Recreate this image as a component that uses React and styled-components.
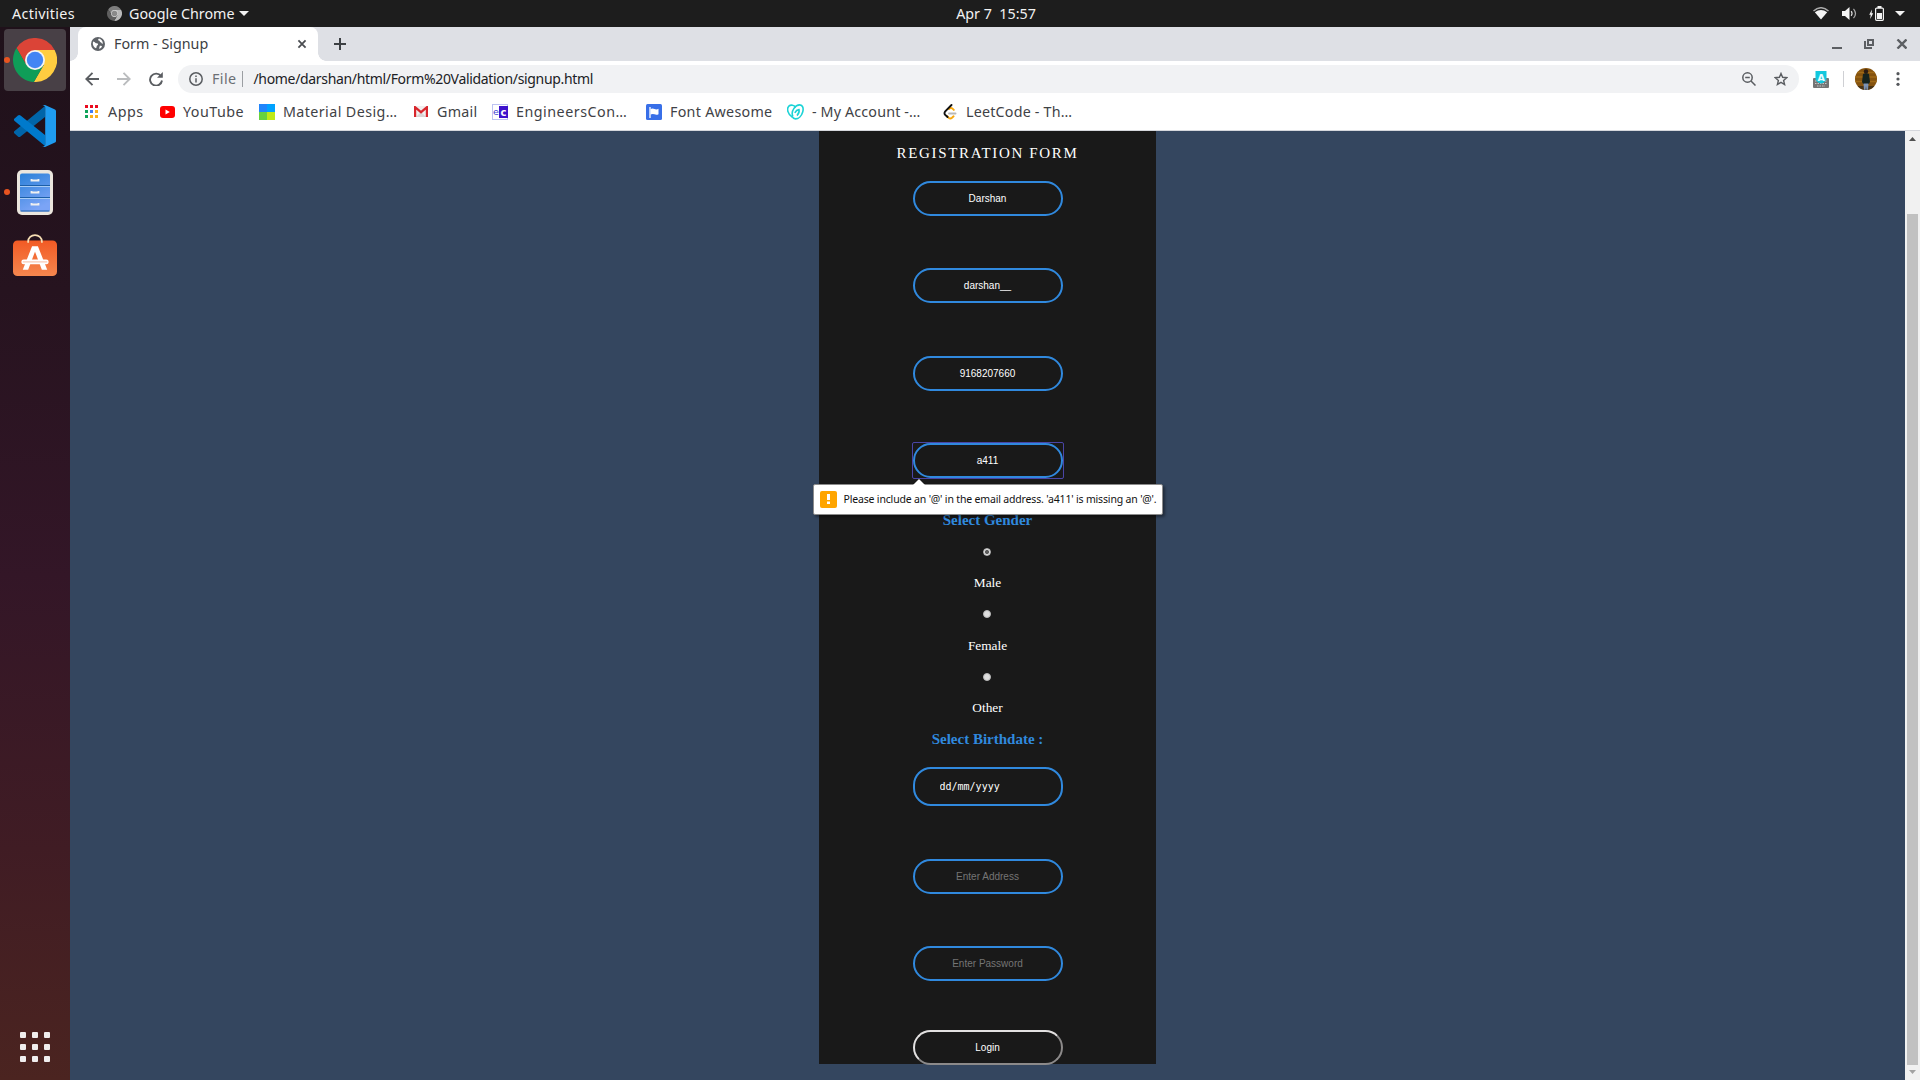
import React from "react";
import styled, { createGlobalStyle, css } from "styled-components";

const GlobalStyle = createGlobalStyle`
  html, body { margin: 0; padding: 0; overflow: hidden; }
  *, *::before, *::after { box-sizing: border-box; }
  svg { display: block; flex: none; }
`;

const uiFont = css`
  font-family: "Noto Sans", sans-serif;
  font-size: 14.3px;
  line-height: 20px;
  white-space: pre;
`;

const Desktop = styled.div`
  width: 1920px;
  height: 1080px;
  display: flex;
  flex-direction: column;
  overflow: hidden;
`;

/* ---------- GNOME top bar ---------- */
const TopBar = styled.header`
  height: 27px;
  flex: none;
  background: #1d1d1d;
  color: #f2f2f2;
  display: grid;
  grid-template-columns: 1fr auto 1fr;
  align-items: center;
  padding: 0 15px 0 12px;
  ${uiFont}
`;
const TopLeft = styled.div`
  display: flex;
  align-items: center;
`;
const TopRight = styled.div`
  display: flex;
  align-items: center;
  justify-content: flex-end;
`;
const Label = styled.span`
  letter-spacing: ${(p) => p.$track || 0}px;
  margin-left: ${(p) => p.$ml || 0}px;
  font-size: ${(p) => p.$size || 14.3}px;
  color: ${(p) => p.$color || "inherit"};
  flex: none;
`;
const Clock = styled.time`
  margin-left: 75px;
`;
const Gap = styled.span`
  display: flex;
  margin-left: ${(p) => p.$ml}px;
`;

/* ---------- dock ---------- */
const Workspace = styled.div`
  flex: 1;
  display: flex;
  min-height: 0;
`;
const Dock = styled.nav`
  width: 70px;
  flex: none;
  padding: 2px 4px 18px;
  display: flex;
  flex-direction: column;
  align-items: center;
  gap: 4px;
  background: linear-gradient(#1f111a 0%, #26131f 25%, #331627 52%, #401c24 78%, #4b2420 100%);
`;
const DockItem = styled.div`
  width: 62px;
  height: 62px;
  flex: none;
  border-radius: 4px;
  display: flex;
  align-items: center;
  justify-content: center;
  position: relative;
  background: ${(p) => (p.$active ? "#484046" : "transparent")};
  ${(p) =>
    p.$running &&
    css`
      &::before {
        content: "";
        position: absolute;
        left: 0;
        top: 28px;
        width: 6px;
        height: 6px;
        border-radius: 50%;
        background: #e95420;
      }
    `}
`;
const AppGrid = styled.div`
  margin-top: auto;
  display: grid;
  grid-template-columns: repeat(3, 6px);
  gap: 6px;
`;
const AppDot = styled.span`
  height: 6px;
  border-radius: 1px;
  background: #f0eeee;
`;

/* ---------- browser chrome ---------- */
const Browser = styled.main`
  flex: 1;
  min-width: 0;
  display: flex;
  flex-direction: column;
`;
const TabStrip = styled.div`
  height: 34px;
  flex: none;
  background: #dee0e5;
  display: flex;
  align-items: center;
  padding: 0 13px 0 8px;
  color: #3c4043;
  ${uiFont}
`;
const Tab = styled.div`
  width: 240px;
  height: 34px;
  background: #fff;
  border-radius: 8px 8px 0 0;
  display: flex;
  align-items: center;
  padding: 0 11px 0 13px;
  position: relative;
  &::before,
  &::after {
    content: "";
    position: absolute;
    bottom: 0;
    width: 8px;
    height: 8px;
  }
  &::before {
    left: -8px;
    background: radial-gradient(circle at 0 0, transparent 7.5px, #fff 8px);
  }
  &::after {
    right: -8px;
    background: radial-gradient(circle at 100% 0, transparent 7.5px, #fff 8px);
  }
`;
const Spacer = styled.span`
  flex: 1;
`;
const Toolbar = styled.div`
  height: 36px;
  flex: none;
  background: #fff;
  display: flex;
  align-items: center;
  padding: 0 19px 0 15px;
  ${uiFont}
`;
const Omnibox = styled.div`
  width: 1621px;
  height: 28px;
  margin-left: 15px;
  border-radius: 14px;
  background: #f1f2f4;
  display: flex;
  align-items: center;
  padding: 0 11px;
`;
const Divider = styled.span`
  width: 1px;
  height: 16px;
  flex: none;
  margin-left: ${(p) => p.$ml}px;
  background: ${(p) => p.$color};
`;
const Bookmarks = styled.div`
  height: 34px;
  flex: none;
  background: #fff;
  border-bottom: 1px solid #d5d7dc;
  padding: 0 0 4px 15px;
  display: flex;
  align-items: center;
  color: #3f4246;
  ${uiFont}
`;
const Bookmark = styled.div`
  width: ${(p) => p.$w}px;
  flex: none;
  display: flex;
  align-items: center;
`;
const BookmarkIcon = styled.span`
  width: ${(p) => p.$w}px;
  flex: none;
  display: flex;
`;

/* ---------- page ---------- */
const Viewport = styled.div`
  flex: 1;
  display: flex;
  min-height: 0;
`;
const Page = styled.div`
  flex: 1;
  background: #34465f;
  display: flex;
  justify-content: center;
  align-items: flex-start;
`;
const ScrollBar = styled.div`
  width: 15px;
  flex: none;
  background: #f1f1f1;
  display: flex;
  flex-direction: column;
  align-items: center;
  padding: 6px 0;
`;
const Thumb = styled.div`
  width: 11px;
  height: 851px;
  margin: 73px 0 5px;
  background: #c1c1c1;
`;
const Form = styled.form`
  width: 337px;
  height: 933px;
  background: #191919;
  padding-top: 13px;
  display: flex;
  flex-direction: column;
  align-items: center;
  color: #fff;
  font-family: "Liberation Serif", serif;
`;
const Title = styled.h1`
  margin: 0 0 19px;
  flex: none;
  font-size: 15px;
  line-height: 18px;
  font-weight: 400;
  letter-spacing: 1.65px;
`;
const Field = styled.div`
  position: relative;
  flex: none;
  width: 150px;
  height: ${(p) => p.$h || 35}px;
  margin-bottom: ${(p) => p.$mb}px;
  ${(p) =>
    p.$focused &&
    css`
      outline: 1px solid #4a45a6;
      border-radius: 1px;
    `}
`;
const Input = styled.input`
  display: block;
  width: 100%;
  height: 100%;
  margin: 0;
  border: 2px solid #3089de;
  border-radius: 18px;
  background: transparent;
  color: #fff;
  text-align: center;
  outline: none;
  padding: 0 10px;
  font: 10px "Liberation Sans", sans-serif;
  &::placeholder {
    color: #757575;
    opacity: 1;
  }
`;
const DateInput = styled(Input)`
  padding-left: 25px;
  text-align: left;
  font-family: "DejaVu Sans Mono", monospace;
`;
const SubHead = styled.h2`
  margin: 0 0 19px;
  flex: none;
  font-size: 15px;
  line-height: 18px;
  color: #3089de;
`;
const Option = styled.label`
  flex: none;
  display: flex;
  flex-direction: column;
  align-items: center;
  gap: 19.3px;
  height: 62.5px;
  font-size: 13.33px;
  line-height: 16px;
  &:last-of-type {
    height: 57px;
  }
`;
const Radio = styled.span`
  width: 8px;
  height: 8px;
  flex: none;
  border-radius: 50%;
  margin-right: 1px;
  border: 1px solid #b9b9b9;
  background: ${(p) =>
    p.$checked ? "radial-gradient(circle, #5c5c5c 0 1.6px, #dcdcdc 2.4px)" : "#dedede"};
`;
const Submit = styled.button`
  flex: none;
  width: 150px;
  height: 35px;
  margin: 0;
  padding: 0;
  border: 2px solid;
  border-color: #e3e1e1 #8c8a8a #8c8a8a #e3e1e1;
  border-radius: 18px;
  background: transparent;
  color: #fff;
  font: 10px "Liberation Sans", sans-serif;
`;
const Tooltip = styled.div`
  position: absolute;
  left: -100px;
  top: 41px;
  width: 350px;
  height: 31px;
  background: #fff;
  border: 1px solid #8b8b8b;
  border-radius: 2px;
  box-shadow: 2px 2px 3px rgba(0, 0, 0, 0.4);
  display: flex;
  align-items: center;
  padding: 0 6px 1px;
  color: #111;
  z-index: 1;
  ${uiFont}
`;
const TooltipArrow = styled.span`
  position: absolute;
  left: 99px;
  top: -6px;
  border: 6px solid transparent;
  border-top: 0;
  border-bottom-color: #fff;
`;
const WarnBadge = styled.span`
  width: 17px;
  height: 17px;
  flex: none;
  border-radius: 2px;
  background: #ffa500;
  display: flex;
  align-items: center;
  justify-content: center;
`;

/* ---------- icons ---------- */
const ChromeLogo = ({ size, mono }) => {
  const c = mono
    ? ["#7d7d7d", "#b9b9b9", "#5f5f5f", "#d9d9d9", "#8a8a8a"]
    : ["#db4437", "#ffcd40", "#0f9d58", "#f4f4f4", "#4285f4"];
  return (
    <svg width={size} height={size} viewBox="-22 -22 44 44">
      <path fill={c[0]} d="M-18.46-11.97A22 22 0 0 1 19.6-10H0L-8.66 5z" />
      <path fill={c[1]} d="M19.6-10A22 22 0 0 1-1.14 21.97L8.66 5 0-10z" />
      <path fill={c[2]} d="M-1.14 21.97A22 22 0 0 1-18.46-11.97L-8.66 5H8.66z" />
      <circle r="10" fill={c[3]} />
      <circle r="8.2" fill={c[4]} />
    </svg>
  );
};

const VsCode = () => (
  <svg width="42" height="42" viewBox="0 0 42 42">
    <path fill="#0065a9" d="M31 1v11L6.5 31.6a2 2 0 0 1-2.6-.1L.6 28.600a1.600 1.600 0 0 1 0-2.500z" />
    <path fill="#007acc" d="M31 41V30L6.500 10.400a2 2 0 0 0-2.600.1L.6 13.400a1.600 1.600 0 0 0 0 2.500z" />
    <path fill="#1f9cf0" d="M31 0l10 4.400a1.800 1.800 0 0 1 1 1.600v30a1.800 1.800 0 0 1-1 1.600L31 42c-1 .3-2-.2-3-1 1.500 1 3.200.2 3.200-1.500V2.500C31.200.8 29.500 0 28 1c1-.8 2-1.300 3-1z" />
  </svg>
);

const Files = () => (
  <svg width="36" height="45" viewBox="0 0 36 45">
    <defs>
      <linearGradient id="drawer" x1="0" y1="0" x2="0.4" y2="1">
        <stop offset="0" stopColor="#2a80d8" />
        <stop offset="1" stopColor="#7ba4f6" />
      </linearGradient>
    </defs>
    <rect width="36" height="45" rx="5" fill="#ebe6de" />
    <rect x="3" y="3.500" width="30" height="38" rx="2" fill="url(#drawer)" />
    <path d="M3 15.500h30M3 27.500h30M3.500 41h29" stroke="#1c5fa8" strokeWidth="1" />
    <path d="M3 16.500h30M3 28.500h30" stroke="#a8ccf5" strokeWidth="1" />
    <path
      d="M14.500 9v1.500h7V9M14.500 21v1.500h7V21M14.500 33v1.500h7V33"
      fill="none"
      stroke="#f0f0f0"
      strokeWidth="1.800"
    />
  </svg>
);

const Software = () => (
  <svg width="44" height="48" viewBox="0 0 45 49">
    <defs>
      <linearGradient id="bag" x1="0" y1="0" x2="0" y2="1">
        <stop offset="0" stopColor="#f25a24" />
        <stop offset="1" stopColor="#f5874f" />
      </linearGradient>
    </defs>
    <rect y="6.500" width="45" height="36.500" rx="4.500" fill="url(#bag)" />
    <path d="M15.500 9V7.500a7 6.500 0 0 1 14 0V9" fill="none" stroke="#f7dfb4" strokeWidth="1.800" />
    <path d="M19.500 12.500h6L35 36.500h-5.500L22.500 18l-7 18.500H10z" fill="#fff" />
    <rect x="8.500" y="26" width="28" height="5" rx="2.500" fill="#fff" />
    <path d="M10 28.500h25" stroke="#f5b9a0" strokeWidth="1" />
  </svg>
);

const Caret = ({ w = 10, h = 5 }) => (
  <svg width={w} height={h} viewBox="0 0 10 5" preserveAspectRatio="none">
    <path d="M0 0h10L5 5z" fill="#f2f2f2" />
  </svg>
);

const Wifi = () => (
  <svg width="16" height="13" viewBox="0 0 16 13">
    <path d="M.5 4Q8-2.500 15.500 4" fill="none" stroke="#aaa" strokeWidth="1.500" />
    <path d="M1.800 5.200Q8 0.800 14.200 5.200L8 12.500z" fill="#f4f4f4" />
  </svg>
);

const Volume = () => (
  <svg width="15" height="13" viewBox="0 0 15 13">
    <path d="M0 4h3l4.500-4v13L3 9H0z" fill="#f4f4f4" />
    <path d="M9.200 4.200q1.700 2.300 0 4.600" fill="none" stroke="#ddd" strokeWidth="1.200" />
    <path d="M11.500 1.800q4 4.700 0 9.400" fill="none" stroke="#aaa" strokeWidth="1.200" />
  </svg>
);

const Battery = () => (
  <svg width="15" height="15" viewBox="0 0 15 15">
    <path d="M3 3.500L.2 8.800h1.500L1.200 13l3-5.800H2.600z" fill="#f4f4f4" />
    <rect x="6.600" y="2.100" width="7.800" height="12.200" rx="1" fill="none" stroke="#f4f4f4" strokeWidth="1.200" />
    <rect x="8.500" y="0" width="4" height="2" fill="#f4f4f4" />
    <rect x="8" y="7" width="5" height="6" fill="#f4f4f4" />
  </svg>
);

const Globe = () => (
  <svg width="14" height="14" viewBox="0 0 14 14">
    <circle cx="7" cy="7" r="7" fill="#5f6368" />
    <path
      d="M2.200 4.600C4.500 5 3.800 6.300 5.600 6.300 7.400 6.300 7.600 7.800 6.200 8.500 5.200 9 6 10.500 5 11.300 3 10.500 1.700 8.500 1.800 6zM8 1.600C6.600 2.600 7 3.700 8.300 3.700 9.200 3.900 8.300 5.200 9.600 5.300 10.700 5.400 10.400 7 11.900 6.600 11.800 4 10.200 2.200 8 1.600zM8.800 8.800C10 8.300 11 9 11 9.800 10.200 11 9 11.700 8 11.900z"
      fill="#fff"
    />
  </svg>
);

const Stroke = ({ size = 14, w = 1.6, color = "#5a5d61", d, children }) => (
  <svg width={size} height={size} viewBox="0 0 14 14" fill="none" stroke={color} strokeWidth={w}>
    {d && <path d={d} />}
    {children}
  </svg>
);

const AppsIcon = () => {
  const colors = ["#ea0b1f", "#ea0b1f", "#ea0b1f", "#10a35a", "#3f7cf5", "#fbb01a", "#10a35a", "#fbb01a", "#fbb01a"];
  return (
    <svg width="13" height="13" viewBox="0 0 13 13">
      {colors.map((c, i) => (
        <rect key={i} x={(i % 3) * 5} y={Math.floor(i / 3) * 5} width="3" height="3" fill={c} />
      ))}
    </svg>
  );
};
const YouTubeIcon = () => (
  <svg width="15" height="12" viewBox="0 0 15 12">
    <rect width="15" height="12" rx="3" fill="#f00" />
    <path d="M5.500 3.600v4.800L9.800 6z" fill="#fff" />
  </svg>
);
const MaterialIcon = () => (
  <svg width="16" height="16" viewBox="0 0 16 16">
    <path fill="#2185fb" d="M0 0h8v8H0z" />
    <path fill="#00a2ff" d="M8 0h8v8H8z" />
    <path fill="#67d33e" d="M0 8h8v8H0z" />
    <path fill="#bfea17" d="M8 8h8v8H8z" />
  </svg>
);
const GmailIcon = () => (
  <svg width="14" height="11" viewBox="0 0 14 11">
    <path fill="#f1eeee" d="M0 0h14v11H0z" />
    <path fill="#d9d4d4" d="M2 11l5-5 5 5z" />
    <path d="M1.100 11V1.200L7 6.200l5.900-5V11" fill="none" stroke="#d8262c" strokeWidth="2.200" />
  </svg>
);
const IconText = styled.text`
  font: ${(p) => (p.$bold ? "bold " : "")}${(p) => p.$size}px "DejaVu Sans", sans-serif;
`;
const EcIcon = () => (
  <svg width="16" height="16" viewBox="0 0 16 16">
    <rect x=".5" y=".5" width="15" height="15" fill="#fff" stroke="#bdc3f2" />
    <rect x="7" y="2" width="9" height="12" fill="#3d12cc" />
    <IconText x="1" y="11" $size={9.5} fill="#3d3fd0">e</IconText>
    <IconText x="8.500" y="11.500" $size={10} $bold fill="#fff">c</IconText>
  </svg>
);
const FontAwesomeIcon = () => (
  <svg width="16" height="16" viewBox="0 0 16 16">
    <rect width="16" height="16" rx="1.500" fill="#386fe8" />
    <path d="M4 3v11" stroke="#fff" strokeWidth="1.300" />
    <path d="M4.500 5q2-1 4 0t4-.2v5.400q-2 1-4 .1t-4 .2z" fill="#fff" />
  </svg>
);
const GoDaddyIcon = () => (
  <svg width="17" height="16" viewBox="0 0 17 16" fill="none" stroke="#1bd3d6" strokeWidth="1.600">
    <path d="M5.200 13C.5 10-.5 4.500 1.800 2.200 4 .2 7 1.200 8.800 3.200" />
    <path d="M5.800 12.200C3.500 7 8.500.9 12.700.9c3.200 0 4 3.600 3 7-1.200 4-4.200 7-7.200 7-1.500 0-2.700-1-3.300-2.200" />
    <path d="M7.800 8.800c1-1.800 2.700-3 4.200-3.200.4 1.800-.3 4.200-2 6" />
  </svg>
);
const LeetCodeIcon = () => (
  <svg width="15" height="16" viewBox="0 0 15 16" fill="none" strokeLinecap="round" strokeWidth="1.900">
    <path d="M6 9.500h6.500" stroke="#b8b8b8" />
    <path d="M4 12l1.600 1.700q1.700 1.500 3.400.1l1.600-1.500M6 5l1-.8q1.300-.7 2.500.4l1.300 1.300" stroke="#f9a80c" />
    <path d="M8.500 1L2 7.700q-1 1.500 0 3L4.500 13" stroke="#111" />
  </svg>
);
const KeyboardIcon = () => (
  <svg width="16" height="17" viewBox="0 0 16 17">
    <rect y="7" width="16" height="10" rx="1" fill="#757575" />
    <path d="M2 10h12M2 12.500h12M4 15h8" stroke="#c9c9c9" strokeWidth="1" strokeDasharray="1.500 1" />
    <path d="M2.500 0h11v8.500q-2 3.500-5.500 4-3.500-.5-5.500-4z" fill="#12c8de" />
    <IconText x="4.400" y="9.500" $size={9.5} $bold fill="#e8fbff">A</IconText>
  </svg>
);
const Avatar = () => (
  <svg width="22" height="22" viewBox="0 0 22 22">
    <defs>
      <clipPath id="avatar"><circle cx="11" cy="11" r="11" /></clipPath>
    </defs>
    <g clipPath="url(#avatar)">
      <path fill="#85530f" d="M0 0h22v22H0z" />
      <path d="M0 4.500h22M0 9h22M0 13.500h22" stroke="#a06a17" strokeWidth="1.500" />
      <path d="M0 18h22v4H0z" fill="#4a3416" />
      <circle cx="11" cy="3.500" r="2.200" fill="#2b1b12" />
      <path d="M8 6q3-1.500 6 0l1 8-1.200 2H8.200L7 14z" fill="#15231f" />
      <path d="M8.500 15.500h5L13 22h-1.500L11 18l-.5 4H9z" fill="#7c93b5" />
    </g>
  </svg>
);

const bookmarks = [
  { w: 75, iw: 23, icon: <AppsIcon />, text: "Apps", track: 0.5 },
  { w: 99, iw: 23, icon: <YouTubeIcon />, text: "YouTube", track: 0.47 },
  { w: 155, iw: 24, icon: <MaterialIcon />, text: "Material Desig…", track: 0.4 },
  { w: 78, iw: 23, icon: <GmailIcon />, text: "Gmail", track: 0.25 },
  { w: 154, iw: 24, icon: <EcIcon />, text: "EngineersCon…", track: 0.5 },
  { w: 141, iw: 24, icon: <FontAwesomeIcon />, text: "Font Awesome", track: 0.27 },
  { w: 156, iw: 25, icon: <GoDaddyIcon />, text: "- My Account -…", track: 0.15 },
  { w: 140, iw: 23, icon: <LeetCodeIcon />, text: "LeetCode - Th…", track: 0.2 },
];

const fields = ["Darshan", "darshan__", "9168207660"];
const genders = ["Male", "Female", "Other"];

export default function App() {
  return (
    <Desktop>
      <GlobalStyle />
      <TopBar>
        <TopLeft>
          <Label $track={0.34}>Activities</Label>
          <Gap $ml={32}><ChromeLogo size={15} mono /></Gap>
          <Label $ml={7}>Google Chrome</Label>
          <Gap $ml={4}><Caret /></Gap>
        </TopLeft>
        <Clock>Apr 7  15:57</Clock>
        <TopRight>
          <Wifi />
          <Gap $ml={13}><Volume /></Gap>
          <Gap $ml={12}><Battery /></Gap>
          <Gap $ml={11}><Caret /></Gap>
        </TopRight>
      </TopBar>
      <Workspace>
        <Dock>
          <DockItem $active $running><ChromeLogo size={44} /></DockItem>
          <DockItem><VsCode /></DockItem>
          <DockItem $running><Files /></DockItem>
          <DockItem><Software /></DockItem>
          <AppGrid>
            {Array.from({ length: 9 }, (_, i) => <AppDot key={i} />)}
          </AppGrid>
        </Dock>
        <Browser>
          <TabStrip>
            <Tab>
              <Globe />
              <Label $ml={9}>Form - Signup</Label>
              <Spacer />
              <Stroke size={10} w={2.5} d="M2 2l10 10M12 2L2 12" color="#4a4d51" />
            </Tab>
            <Gap $ml={15}><Stroke w={2} d="M7 1v12M1 7h12" color="#3c4043" /></Gap>
            <Spacer />
            <svg width="75" height="10" viewBox="0 0 75 10" fill="none" stroke="#5c5f63">
              <path d="M0 9h10" strokeWidth="2" />
              <path d="M36 1h5v5h-5zM33 2v7h7" strokeWidth="2" />
              <path d="M65.500 .5l9 9M74.500 .5l-9 9" strokeWidth="2.400" />
            </svg>
          </TabStrip>
          <Toolbar>
            <Stroke w={1.9} d="M14 7H1.500M7.500 .8L1.300 7l6.200 6.200" />
            <Gap $ml={18}><Stroke w={1.9} color="#babcbe" d="M0 7h12.500M6.500 .8L12.700 7l-6.200 6.200" /></Gap>
            <Gap $ml={18}>
              <Stroke w={1.9}>
                <path d="M12 4.200A6 6 0 1 0 13 8.500" />
                <path d="M13.800 0v5.800H8z" fill="#5a5d61" stroke="none" />
              </Stroke>
            </Gap>
            <Omnibox>
              <Stroke w={1.5}>
                <circle cx="7" cy="7" r="6.200" />
                <path d="M7 6.200v4.300M7 3.500v1.600" />
              </Stroke>
              <Label $ml={9} $track={0.4} $color="#6b6f74">File</Label>
              <Divider $ml={6} $color="#9b9ea2" />
              <Label $ml={10} $size={14} $track={-0.33} $color="#202124">/home/darshan/html/Form%20Validation/signup.html</Label>
              <Spacer />
              <Stroke w={1.5}>
                <circle cx="5.500" cy="5.500" r="4.700" />
                <path d="M9 9l4.500 4.500M3.200 5.500h4.600" />
              </Stroke>
              <Gap $ml={18}>
                <Stroke w={1.4} d="M7 1.500l1.600 3.800 4.200.4-3.200 2.700 1 4.100L7 10.300l-3.600 2.200 1-4.100L1.200 5.700l4.200-.4z" />
              </Gap>
            </Omnibox>
            <Gap $ml={14}><KeyboardIcon /></Gap>
            <Divider $ml={14} $color="#cfd0d4" />
            <Gap $ml={11}><Avatar /></Gap>
            <Gap $ml={19}>
              <svg width="4" height="14" viewBox="0 0 4 14" fill="#54575b">
                <circle cx="2" cy="1.700" r="1.600" /><circle cx="2" cy="7" r="1.600" /><circle cx="2" cy="12.300" r="1.600" />
              </svg>
            </Gap>
          </Toolbar>
          <Bookmarks>
            {bookmarks.map((b) => (
              <Bookmark key={b.text} $w={b.w}>
                <BookmarkIcon $w={b.iw}>{b.icon}</BookmarkIcon>
                <Label $track={b.track}>{b.text}</Label>
              </Bookmark>
            ))}
          </Bookmarks>
          <Viewport>
            <Page>
              <Form onSubmit={(e) => e.preventDefault()}>
                <Title>REGISTRATION FORM</Title>
                {fields.map((f) => (
                  <Field key={f} $mb={52.4}><Input defaultValue={f} /></Field>
                ))}
                <Field $mb={32.8} $focused>
                  <Input defaultValue="a411" />
                  <Tooltip>
                    <TooltipArrow />
                    <WarnBadge>
                      <svg width="3" height="10" viewBox="0 0 3 10" fill="#fff">
                        <path d="M0 0h3v6H0zM0 7.500h3V10H0z" />
                      </svg>
                    </WarnBadge>
                    <Label $ml={7} $size={10.5} $track={-0.17}>
                      Please include an '@' in the email address. 'a411' is missing an '@'.
                    </Label>
                  </Tooltip>
                </Field>
                <SubHead>Select Gender</SubHead>
                {genders.map((g, i) => (
                  <Option key={g}>
                    <Radio $checked={i === 0} />
                    {g}
                  </Option>
                ))}
                <SubHead>Select Birthdate :</SubHead>
                <Field $h={39} $mb={53}><DateInput defaultValue="dd/mm/yyyy" /></Field>
                <Field $mb={52}><Input placeholder="Enter Address" /></Field>
                <Field $mb={49}><Input placeholder="Enter Password" /></Field>
                <Submit>Login</Submit>
              </Form>
            </Page>
            <ScrollBar>
              <svg width="7" height="4" viewBox="0 0 7 4"><path d="M0 4L3.500 0 7 4z" fill="#505050" /></svg>
              <Thumb />
              <svg width="7" height="4" viewBox="0 0 7 4"><path d="M0 0l3.500 4L7 0z" fill="#a3a3a3" /></svg>
            </ScrollBar>
          </Viewport>
        </Browser>
      </Workspace>
    </Desktop>
  );
}
